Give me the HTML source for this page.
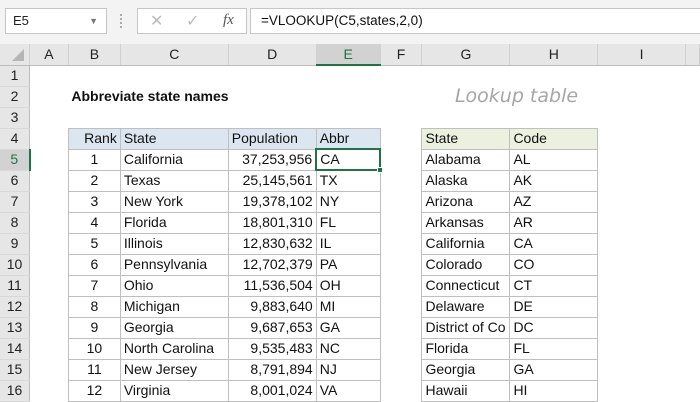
<!DOCTYPE html>
<html><head><style>
*{margin:0;padding:0;box-sizing:border-box}
body{width:700px;height:400px;overflow:hidden;background:#fff;font-family:"Liberation Sans",sans-serif;position:relative}
.tb{position:absolute;left:0;top:0;width:700px;height:44px;background:#f3f3f3}
.nb{position:absolute;left:5px;top:8px;width:102px;height:26px;background:#fff;border:1px solid #c6c6c6;font-size:13px;line-height:24px;padding-left:7px;color:#222}
.fx{position:absolute;left:137px;top:8px;width:110px;height:26px;background:#fff;border:1px solid #c6c6c6}
.fb{position:absolute;left:250px;top:8px;width:460px;height:26px;background:#fff;border:1px solid #c6c6c6;font-size:13.5px;line-height:24px;padding-left:10px;color:#111}
table{position:absolute;left:0;top:44px;border-collapse:collapse;table-layout:fixed;font-size:14px}
tr{height:21px}
td{height:20px;line-height:19px;padding:0 3px;white-space:nowrap;overflow:hidden;color:#111}
tr.h td{background:#e6e6e6;text-align:center;border-right:1px solid #d0d0d0;border-bottom:1px solid #bdbdbd;color:#222;font-size:14px;height:20px;line-height:18px}
td.r{background:#e6e6e6;text-align:center;border-right:1px solid #bdbdbd;border-bottom:1px solid #d8d8d8;color:#222;padding:0}
td.b{border:1px solid #bfbfbf}
.R{text-align:right}.C{text-align:center}
.hb{background:#dce6f1}.hg{background:#ebf1de}
</style></head><body>
<div class="tb">
<div class="nb">E5<span style="position:absolute;right:8px;top:0;font-size:9px;color:#777">▼</span></div>
<div style="position:absolute;left:120px;top:14px;width:2px;height:14px;border-left:2px dotted #aaa"></div>
<div class="fx"><span style="position:absolute;left:12px;top:2px;color:#bbb;font-size:16px">✕</span><span style="position:absolute;left:48px;top:2px;color:#bbb;font-size:16px">✓</span><span style="position:absolute;left:85px;top:3px;color:#555;font-style:italic;font-family:'Liberation Serif',serif;font-size:15px">fx</span></div>
<div class="fb">=VLOOKUP(C5,states,2,0)</div>
</div>
<table>
<colgroup><col style="width:29px"><col style="width:39px"><col style="width:52px"><col style="width:108px"><col style="width:88px"><col style="width:64px"><col style="width:42px"><col style="width:88px"><col style="width:88px"><col style="width:88px"><col style="width:14px"></colgroup>
<tr class="h"><td style="padding:0;position:relative"><svg width="29" height="18" style="display:block"><polygon points="24,4 24,16 12,16" fill="#b5b5b5"/></svg></td><td>A</td><td>B</td><td>C</td><td>D</td><td style="background:#d2d2d2;border-bottom:2px solid #217346;color:#217346">E</td><td>F</td><td>G</td><td>H</td><td>I</td><td></td></tr>
<tr><td class="r">1</td><td></td><td></td><td></td><td></td><td></td><td></td><td></td><td></td><td></td><td></td></tr>
<tr><td class="r">2</td><td></td><td colspan="3" style="font-weight:bold;font-size:14px">Abbreviate state names</td><td></td><td></td><td colspan="3" style="text-align:left;padding-left:33px;color:#a6a6a6;font-style:italic;font-size:19px;font-family:'Comic Sans MS','DejaVu Sans',sans-serif;font-weight:300">Lookup table</td><td></td></tr>
<tr><td class="r">3</td><td></td><td></td><td></td><td></td><td></td><td></td><td></td><td></td><td></td><td></td></tr>
<tr><td class="r">4</td><td></td><td class="b hb R">Rank</td><td class="b hb">State</td><td class="b hb">Population</td><td class="b hb">Abbr</td><td></td><td class="b hg">State</td><td class="b hg">Code</td><td></td><td></td></tr>
<tr><td class="r" style="background:#d2d2d2;color:#217346;border-right:2px solid #217346">5</td><td></td><td class="b C">1</td><td class="b">California</td><td class="b R">37,253,956</td><td class="b" style="border:2px solid #217346;position:relative">CA</td><td></td><td class="b">Alabama</td><td class="b">AL</td><td></td><td></td></tr>
<tr><td class="r">6</td><td></td><td class="b C">2</td><td class="b">Texas</td><td class="b R">25,145,561</td><td class="b">TX</td><td></td><td class="b">Alaska</td><td class="b">AK</td><td></td><td></td></tr>
<tr><td class="r">7</td><td></td><td class="b C">3</td><td class="b">New York</td><td class="b R">19,378,102</td><td class="b">NY</td><td></td><td class="b">Arizona</td><td class="b">AZ</td><td></td><td></td></tr>
<tr><td class="r">8</td><td></td><td class="b C">4</td><td class="b">Florida</td><td class="b R">18,801,310</td><td class="b">FL</td><td></td><td class="b">Arkansas</td><td class="b">AR</td><td></td><td></td></tr>
<tr><td class="r">9</td><td></td><td class="b C">5</td><td class="b">Illinois</td><td class="b R">12,830,632</td><td class="b">IL</td><td></td><td class="b">California</td><td class="b">CA</td><td></td><td></td></tr>
<tr><td class="r">10</td><td></td><td class="b C">6</td><td class="b">Pennsylvania</td><td class="b R">12,702,379</td><td class="b">PA</td><td></td><td class="b">Colorado</td><td class="b">CO</td><td></td><td></td></tr>
<tr><td class="r">11</td><td></td><td class="b C">7</td><td class="b">Ohio</td><td class="b R">11,536,504</td><td class="b">OH</td><td></td><td class="b">Connecticut</td><td class="b">CT</td><td></td><td></td></tr>
<tr><td class="r">12</td><td></td><td class="b C">8</td><td class="b">Michigan</td><td class="b R">9,883,640</td><td class="b">MI</td><td></td><td class="b">Delaware</td><td class="b">DE</td><td></td><td></td></tr>
<tr><td class="r">13</td><td></td><td class="b C">9</td><td class="b">Georgia</td><td class="b R">9,687,653</td><td class="b">GA</td><td></td><td class="b" style="text-overflow:clip">District of Co</td><td class="b">DC</td><td></td><td></td></tr>
<tr><td class="r">14</td><td></td><td class="b C">10</td><td class="b">North Carolina</td><td class="b R">9,535,483</td><td class="b">NC</td><td></td><td class="b">Florida</td><td class="b">FL</td><td></td><td></td></tr>
<tr><td class="r">15</td><td></td><td class="b C">11</td><td class="b">New Jersey</td><td class="b R">8,791,894</td><td class="b">NJ</td><td></td><td class="b">Georgia</td><td class="b">GA</td><td></td><td></td></tr>
<tr><td class="r">16</td><td></td><td class="b C">12</td><td class="b">Virginia</td><td class="b R">8,001,024</td><td class="b">VA</td><td></td><td class="b">Hawaii</td><td class="b">HI</td><td></td><td></td></tr>
</table>
<div style="position:absolute;left:377px;top:167px;width:6px;height:6px;background:#217346;border:1px solid #fff"></div>
</body></html>
